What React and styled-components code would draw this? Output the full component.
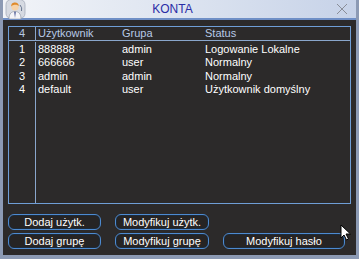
import styled, { createGlobalStyle } from 'styled-components';

const GlobalStyle = createGlobalStyle`
  html, body {
    margin: 0;
    padding: 0;
    background: #2c2a2a;
  }
  * {
    box-sizing: border-box;
  }
`;

const users = [
  { id: 1, name: '888888', group: 'admin', status: 'Logowanie Lokalne' },
  { id: 2, name: '666666', group: 'user', status: 'Normalny' },
  { id: 3, name: 'admin', group: 'admin', status: 'Normalny' },
  { id: 4, name: 'default', group: 'user', status: 'Użytkownik domyślny' },
];

function UserIcon() {
  return (
    <svg width="22" height="20" viewBox="0 0 22 20">
      <rect x="2" y="0.5" width="19" height="19" rx="5" fill="#d6dae2" stroke="#a4acba" strokeWidth="0.8" />
      <path d="M5 20 C5 14 8 12.5 11 12.5 C14 12.5 17 14 17 20 Z" fill="#f4f4f8" stroke="#8890a0" strokeWidth="0.6" />
      <path d="M10.2 12.8 L11 19 L11.8 12.8 Z" fill="#3a4a8a" />
      <circle cx="11" cy="8" r="3.6" fill="#f6d2a8" />
      <path d="M7.2 7.6 C7.2 4 9 3.4 11 3.4 C13.4 3.4 14.8 4.6 14.8 7.2 C13.4 5.8 11.6 5.6 9.6 6 C8.6 6.2 7.8 6.8 7.2 7.6 Z" fill="#e08a2a" />
      <path d="M16 6 A6 6 0 0 1 17.5 12" fill="none" stroke="#6a7890" strokeWidth="1" />
    </svg>
  );
}

function Cursor() {
  return (
    <svg width="12" height="17" viewBox="0 0 12 17">
      <path d="M1 1 L1 14 L4 11 L6.5 16 L8.5 15 L6 10 L10.5 10 Z" fill="#ffffff" stroke="#000000" strokeWidth="1" strokeLinejoin="round" />
    </svg>
  );
}

export default function App() {
  return (
    <>
      <GlobalStyle />
      <Window>
        <TitleBar>
          <IconSlot>
            <UserIcon />
          </IconSlot>
          <Title>KONTA</Title>
          <CloseButton>
            <svg width="12" height="12" viewBox="0 0 12 12">
              <path d="M1 1 L11 11 M11 1 L1 11" stroke="#8a8e98" strokeWidth="1" />
            </svg>
          </CloseButton>
        </TitleBar>

        <Body>
          <TablePanel>
            <HeaderRow>
              <NumCell>4</NumCell>
              <Cell>Użytkownik</Cell>
              <Cell>Grupa</Cell>
              <Cell>Status</Cell>
            </HeaderRow>
            <Rows>
              {users.map((u) => (
                <Row key={u.id}>
                  <NumCell>{u.id}</NumCell>
                  <Cell>{u.name}</Cell>
                  <Cell>{u.group}</Cell>
                  <Cell>{u.status}</Cell>
                </Row>
              ))}
              <Row $fill>
                <NumCell />
              </Row>
            </Rows>
          </TablePanel>

          <ButtonGrid>
            <Button>Dodaj użytk.</Button>
            <Button>Modyfikuj użytk.</Button>
            <span />
            <Button>Dodaj grupę</Button>
            <Button>Modyfikuj grupę</Button>
            <Button>Modyfikuj hasło</Button>
          </ButtonGrid>
          <CursorSlot>
            <Cursor />
          </CursorSlot>
        </Body>
      </Window>
    </>
  );
}

const Window = styled.div`
  width: 359px;
  height: 259px;
  display: flex;
  flex-direction: column;
  background: #2c2a2a;
  border-left: 3px solid #8c9ab4;
  border-right: 3px solid #8c9ab4;
  border-bottom: 4px solid #8c9ab4;
  font-family: "Liberation Sans", Arial, sans-serif;
  overflow: hidden;
`;

const TitleBar = styled.div`
  height: 20px;
  margin: 0 -3px;
  display: flex;
  align-items: center;
  background: linear-gradient(to right, #f2f4f8 0%, #dde4f0 50%, #c6d2e8 100%);
  border-bottom: 2px solid #6f8fc6;
`;

const IconSlot = styled.div`
  width: 28px;
  padding-left: 4px;
  display: flex;
  align-items: center;
`;

const Title = styled.div`
  flex: 1;
  text-align: center;
  font-size: 12px;
  color: #2a2ca6;
  padding-right: 14px;
`;

const CloseButton = styled.div`
  width: 28px;
  display: flex;
  align-items: center;
  justify-content: center;
  padding-right: 6px;
`;

const Body = styled.div`
  flex: 1;
  position: relative;
  display: flex;
  flex-direction: column;
  padding: 6px 5px 0 5px;
`;

const TablePanel = styled.div`
  height: 178px;
  border: 1px solid #6f9ed6;
  display: flex;
  flex-direction: column;
`;

const HeaderRow = styled.div`
  display: grid;
  grid-template-columns: 27px 84px 83px 1fr;
  height: 14px;
  border-bottom: 1px solid #8aa6cc;
  color: #b7c9e6;
  font-size: 11px;
  line-height: 13px;
`;

const Rows = styled.div`
  flex: 1;
  display: flex;
  flex-direction: column;
  padding-top: 1px;
`;

const Row = styled.div`
  display: grid;
  grid-template-columns: 27px 84px 83px 1fr;
  height: 13.4px;
  flex: ${(p) => (p.$fill ? '1' : 'none')};
  color: #ffffff;
  font-size: 11px;
  line-height: 14px;
`;

const NumCell = styled.div`
  text-align: center;
  border-right: 1px solid #8aa6cc;
`;

const Cell = styled.div`
  padding-left: 2px;
  white-space: nowrap;
`;

const ButtonGrid = styled.div`
  display: grid;
  grid-template-columns: 93px 94px 122px;
  column-gap: 14px;
  row-gap: 3px;
  margin-top: 10px;
`;

const Button = styled.div`
  height: 16px;
  border: 1px solid #4d8ad0;
  border-radius: 6px;
  background: #262424;
  box-shadow: inset 0 0 0 1px #1c2a3a;
  color: #ffffff;
  font-size: 11px;
  line-height: 14px;
  text-align: center;
  white-space: nowrap;
`;

const CursorSlot = styled.div`
  position: absolute;
  left: 337px;
  top: 204px;
`;
